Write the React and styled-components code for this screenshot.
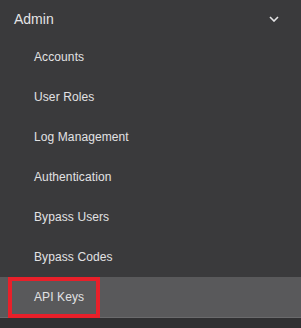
import React from 'react';
import styled, { createGlobalStyle } from "styled-components";

const GlobalStyle = createGlobalStyle`
  body {
    margin: 0;
    background-color: #303032;
    font-family: "Liberation Sans", Arial, sans-serif;
  }
`;

const Sidebar = styled.nav`
  width: 301px;
  height: 328px;
  background-color: #303032;
  overflow: hidden;
`;

const Section = styled.div`
  background-color: #3a3a3c;
`;

const SectionHeader = styled.div`
  height: 37px;
  display: flex;
  align-items: center;
  justify-content: space-between;
  padding: 0 22px 0 14px;
  color: #e4e4e6;
  font-size: 14px;
`;

const SubMenu = styled.ul`
  list-style: none;
  margin: 0;
  padding: 0;
`;

const MenuItem = styled.li`
  position: relative;
  height: 40px;
  display: flex;
  align-items: center;
  padding-left: 34px;
  font-size: 12px;
  letter-spacing: 0.1px;
  color: #e2e2e4;
  background-color: ${props => props.$active ? '#59595b' : 'transparent'};
  border-bottom: ${props => props.$active ? '1px solid #6a6a6c' : 'none'};
`;

const Highlight = styled.span`
  position: absolute;
  left: 8px;
  top: 0;
  width: 92px;
  height: 41px;
  box-sizing: border-box;
  border: 4px solid #e8202a;
`;

const items = [
    'Accounts',
    'User Roles',
    'Log Management',
    'Authentication',
    'Bypass Users',
    'Bypass Codes',
    'API Keys',
];

const Chevron = () => (
    <svg width="10" height="6" viewBox="0 0 10 6">
        <path d="M1 1l4 4 4-4" fill="none" stroke="#e4e4e6" strokeWidth="1.6" />
    </svg>
);

const App = () => {
    const selected = 'API Keys';

    return (
        <>
            <GlobalStyle />
            <Sidebar>
                <Section>
                    <SectionHeader>
                        <span>Admin</span>
                        <Chevron />
                    </SectionHeader>
                    <SubMenu>
                        {items.map(item => (
                            <MenuItem key={item} $active={item === selected}>
                                {item === selected && <Highlight />}
                                {item}
                            </MenuItem>
                        ))}
                    </SubMenu>
                </Section>
            </Sidebar>
        </>
    );
};

export default App;
